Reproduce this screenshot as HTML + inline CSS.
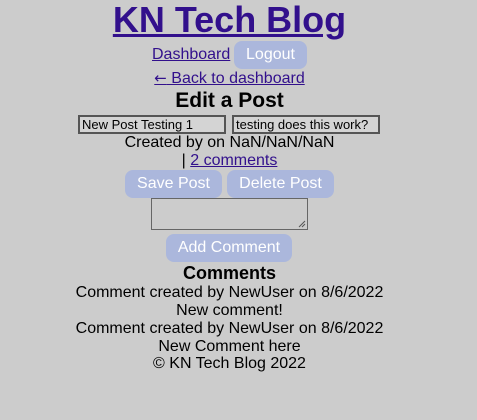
<!DOCTYPE html>
<html><head><style>
body{margin:0;width:477px;height:420px;background:#cccccc;font-family:"Liberation Sans",sans-serif;position:relative;overflow:hidden}
.l{position:absolute;left:0;width:459px;text-align:center;font-size:16px;color:#000;line-height:18px;white-space:nowrap}
a{color:#32108c}
.btn{display:inline-block;background:#abb7dc;color:#fff;border-radius:8px;font-size:16px;line-height:28px;height:28px;position:absolute;text-align:center}
.inp{position:absolute;height:15px;border:2px solid #555;background:#d4d4d4;font-size:13px;line-height:15px;padding-left:2px;box-sizing:content-box}
</style></head><body>
<div class="l" style="top:0;font-size:36px;line-height:40px;font-weight:bold"><a href="#">KN Tech Blog</a></div>
<a href="#" style="position:absolute;left:152px;top:46px;font-size:16px;line-height:18px">Dashboard</a>
<div class="btn" style="left:234px;top:41px;width:73px">Logout</div>
<div class="l" style="top:69px"><a href="#"><span style="font-family:'DejaVu Sans',sans-serif;font-size:15px">←</span> Back to dashboard</a></div>
<div class="l" style="top:89px;font-size:21px;line-height:24px;font-weight:bold">Edit a Post</div>
<div class="inp" style="left:78px;top:115px;width:142px">New Post Testing 1</div>
<div class="inp" style="left:232px;top:115px;width:142px">testing does this work?</div>
<div class="l" style="top:134px">Created by on NaN/NaN/NaN</div>
<div class="l" style="top:152px">| <a href="#">2 comments</a></div>
<div class="btn" style="left:125px;top:170px;width:97px">Save Post</div>
<div class="btn" style="left:227px;top:170px;width:107px">Delete Post</div>
<div style="position:absolute;left:151px;top:198px;width:155px;height:30px;border:1px solid #666;background:#cccccc">
<svg width="8" height="8" style="position:absolute;right:1px;bottom:1px"><path d="M1 7L7 1M4 7L7 4" stroke="#555" stroke-width="1"/></svg></div>
<div class="btn" style="left:166px;top:234px;width:126px">Add Comment</div>
<div class="l" style="top:263px;font-size:18px;line-height:20px;font-weight:bold">Comments</div>
<div class="l" style="top:284px">Comment created by NewUser on 8/6/2022</div>
<div class="l" style="top:302px">New comment!</div>
<div class="l" style="top:320px">Comment created by NewUser on 8/6/2022</div>
<div class="l" style="top:338px">New Comment here</div>
<div class="l" style="top:355px">© KN Tech Blog 2022</div>
</body></html>
